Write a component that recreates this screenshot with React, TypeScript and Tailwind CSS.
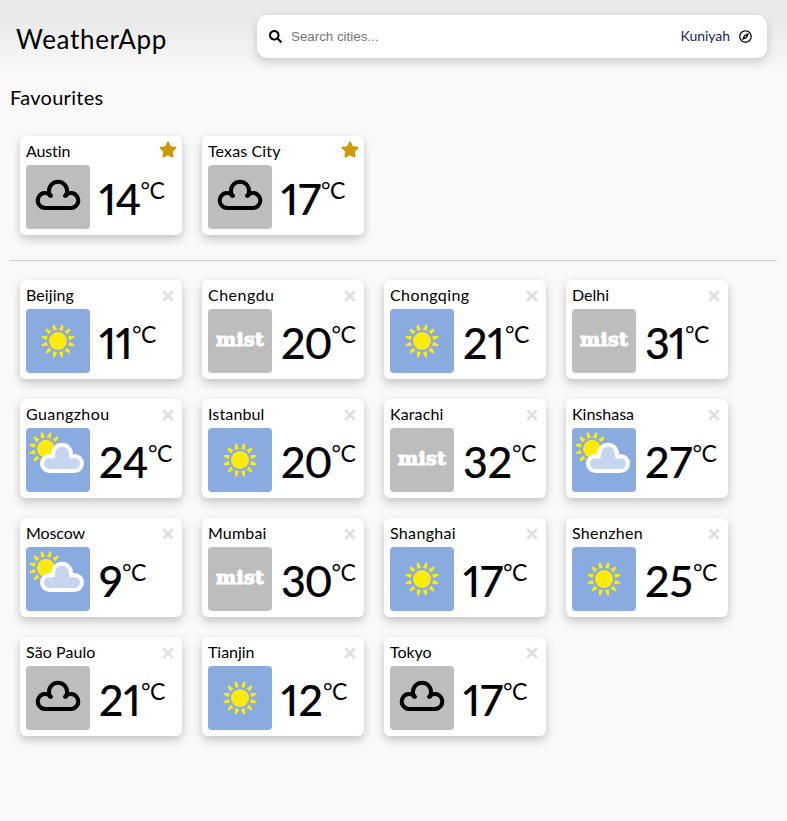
import { useLayoutEffect, useRef, useState } from "react";
import { FaRegCompass, FaSearch, FaStar, FaTimes } from "react-icons/fa";

type Weather = "cloud" | "sun" | "mist" | "partly";
type City = { name: string; nameWidth: number; temp: number; tempWidth: number; weather: Weather };

const favourites: City[] = [
  { name: "Austin", nameWidth: 44.5, temp: 14, tempWidth: 41.5, weather: "cloud" },
  { name: "Texas City", nameWidth: 72.5, temp: 17, tempWidth: 40, weather: "cloud" },
];

const cities: City[] = [
  { name: "Beijing", nameWidth: 48, temp: 11, tempWidth: 33, weather: "sun" },
  { name: "Chengdu", nameWidth: 66.5, temp: 20, tempWidth: 50.5, weather: "mist" },
  { name: "Chongqing", nameWidth: 79.5, temp: 21, tempWidth: 42, weather: "sun" },
  { name: "Delhi", nameWidth: 37, temp: 31, tempWidth: 40, weather: "mist" },
  { name: "Guangzhou", nameWidth: 83.5, temp: 24, tempWidth: 49, weather: "partly" },
  { name: "Istanbul", nameWidth: 56.5, temp: 20, tempWidth: 50.5, weather: "sun" },
  { name: "Karachi", nameWidth: 53.5, temp: 32, tempWidth: 49, weather: "mist" },
  { name: "Kinshasa", nameWidth: 62, temp: 27, tempWidth: 47.5, weather: "partly" },
  { name: "Moscow", nameWidth: 59, temp: 9, tempWidth: 23, weather: "partly" },
  { name: "Mumbai", nameWidth: 58.5, temp: 30, tempWidth: 50.5, weather: "mist" },
  { name: "Shanghai", nameWidth: 66, temp: 17, tempWidth: 40, weather: "sun" },
  { name: "Shenzhen", nameWidth: 71, temp: 25, tempWidth: 48, weather: "sun" },
  { name: "São Paulo", nameWidth: 69.5, temp: 21, tempWidth: 42, weather: "cloud" },
  { name: "Tianjin", nameWidth: 46.5, temp: 12, tempWidth: 42, weather: "sun" },
  { name: "Tokyo", nameWidth: 41.5, temp: 17, tempWidth: 40, weather: "cloud" },
];

/* Spreads the letters of a label evenly over the given width. */
function Label({ text, width, className = "" }: { text: string; width: number; className?: string }) {
  const ref = useRef<HTMLSpanElement>(null);
  const [spacing, setSpacing] = useState(0);
  useLayoutEffect(() => {
    if (ref.current) {
      setSpacing((width - ref.current.getBoundingClientRect().width) / text.length);
    }
  }, [text, width]);
  return (
    <span ref={ref} className={`inline-block whitespace-nowrap ${className}`} style={{ letterSpacing: `${spacing}px` }}>
      {text}
    </span>
  );
}

const rays = [15, 45, 75, 105, 135, 165, 195, 225, 255, 285, 315, 345];

function Sun({ visible = rays }: { visible?: number[] }) {
  return (
    <g fill="#ffeb0a">
      <circle cx="32" cy="32" r="9" />
      {visible.map((a) => (
        <path
          key={a}
          d={a < 180 ? "M31.2 15.2 L29.9 20.8 H34.1 L33 15.2 Z" : "M32.8 15.2 L34.1 20.8 H29.9 L31 15.2 Z"}
          transform={`rotate(${a} 32 32)`}
        />
      ))}
    </g>
  );
}

const body = "M25 30.7 A7.5 7.5 0 1 0 19.5 43 H44.5 A7.5 7.5 0 1 0 39 30.7";
const crown = "M23.8 30.5 Q23 28.5 23 25.7 A9 9 0 0 1 41 25.7 Q41 28.5 40.2 30.5";

function WeatherIcon({ weather }: { weather: Weather }) {
  if (weather === "mist") {
    return (
      <div className="flex size-16 items-center justify-center rounded bg-[#bdbdbd] pb-1">
        <Label
          text="mist"
          width={48}
          className="font-['DejaVu_Serif',serif] text-[19px] leading-6 font-bold text-white [-webkit-text-stroke:1.1px_white]"
        />
      </div>
    );
  }
  return (
    <div className={`size-16 rounded ${weather === "cloud" ? "bg-[#bdbdbd]" : "bg-[#8aabe0]"}`}>
      <svg viewBox="0 0 64 64" className="size-16">
        {weather === "cloud" && (
          <g fill="none" stroke="#000" strokeWidth="4" strokeLinecap="round">
            <path d={body} />
            <path d={crown} />
          </g>
        )}
        {weather === "sun" && <Sun />}
        {weather === "partly" && (
          <>
            <g transform="translate(-12 -11.2)">
              <Sun visible={[225, 255, 285, 315, 345, 15, 45]} />
            </g>
            <path
              d="M23.5 43 A7.5 7.5 0 0 1 23.5 28 L27 28.5 V25.7 A9 9 0 0 1 45 25.7 V28.5 L48.5 28 A7.5 7.5 0 0 1 48.5 43 Z"
              fill="#c6d6f1"
              stroke="#fff"
              strokeWidth="4"
              strokeLinejoin="round"
            />
          </>
        )}
      </svg>
    </div>
  );
}

function Card({ city, favourite = false }: { city: City; favourite?: boolean }) {
  return (
    <article className="h-[99px] w-[162px] rounded-md bg-white px-1.5 pt-[5px] shadow-[0_4px_10px_rgba(0,0,0,0.22)]">
      <div className="flex h-6 items-start justify-between">
        <h3 className="text-[16px] leading-5">
          <Label text={city.name} width={city.nameWidth} />
        </h3>
        {favourite ? (
          <FaStar className="-mr-[0.5px] h-[17px] w-[18px] text-[#cc9a06]" />
        ) : (
          <FaTimes className="mt-[2.5px] mr-[0.5px] size-4 text-[#e0e0e0]" />
        )}
      </div>
      <div className="flex">
        <WeatherIcon weather={city.weather} />
        <div className="ml-[9px] flex items-start">
          <Label
            text={String(city.temp)}
            width={city.tempWidth}
            className="pt-1.5 text-[43px] leading-[56px] font-medium [-webkit-text-stroke:0.15px_black] [font-feature-settings:'pnum']"
          />
          <Label text="°C" width={24} className="pt-2.5 text-[23px] leading-[30px]" />
        </div>
      </div>
    </article>
  );
}

export default function App() {
  return (
    <div className="min-h-[821px] w-full bg-[#f9f9f9] font-['Lato',sans-serif] text-black">
      <header className="flex h-[72px] items-start justify-between bg-linear-to-b from-[#eaeaea] from-30% to-[#f9f9f9] pt-[15px] pr-5 pl-4">
        <h1 className="pt-1 text-[26px] leading-10">
          <Label text="WeatherApp" width={151} />
        </h1>
        <div className="flex h-[43px] w-[510px] items-center rounded-[10px] bg-white px-3 shadow-[0_4px_10px_rgba(0,0,0,0.18)]">
          <FaSearch className="size-[13px]" />
          <input
            type="text"
            placeholder="Search cities..."
            className="ml-[9px] min-w-0 flex-1 font-['Liberation_Sans',Arial,sans-serif] text-[13.33px] outline-none placeholder:text-[#757575]"
          />
          <span className="-mt-[3px] mr-[9px] text-[14px] text-[#13265c]">
            <Label text="Kuniyah" width={49.5} />
          </span>
          <FaRegCompass className="mr-[3px] size-[13px]" />
        </div>
      </header>
      <main className="px-2.5 pt-[11px]">
        <h2 className="text-[20px] leading-7">
          <Label text="Favourites" width={93.5} />
        </h2>
        <section className="flex gap-5 px-2.5 pt-[25px]">
          {favourites.map((c) => (
            <Card key={c.name} city={c} favourite />
          ))}
        </section>
        <hr className="mt-[25px] border-[#cccccc]" />
        <section className="flex flex-wrap gap-5 px-2.5 pt-[19px]">
          {cities.map((c) => (
            <Card key={c.name} city={c} />
          ))}
        </section>
      </main>
    </div>
  );
}
